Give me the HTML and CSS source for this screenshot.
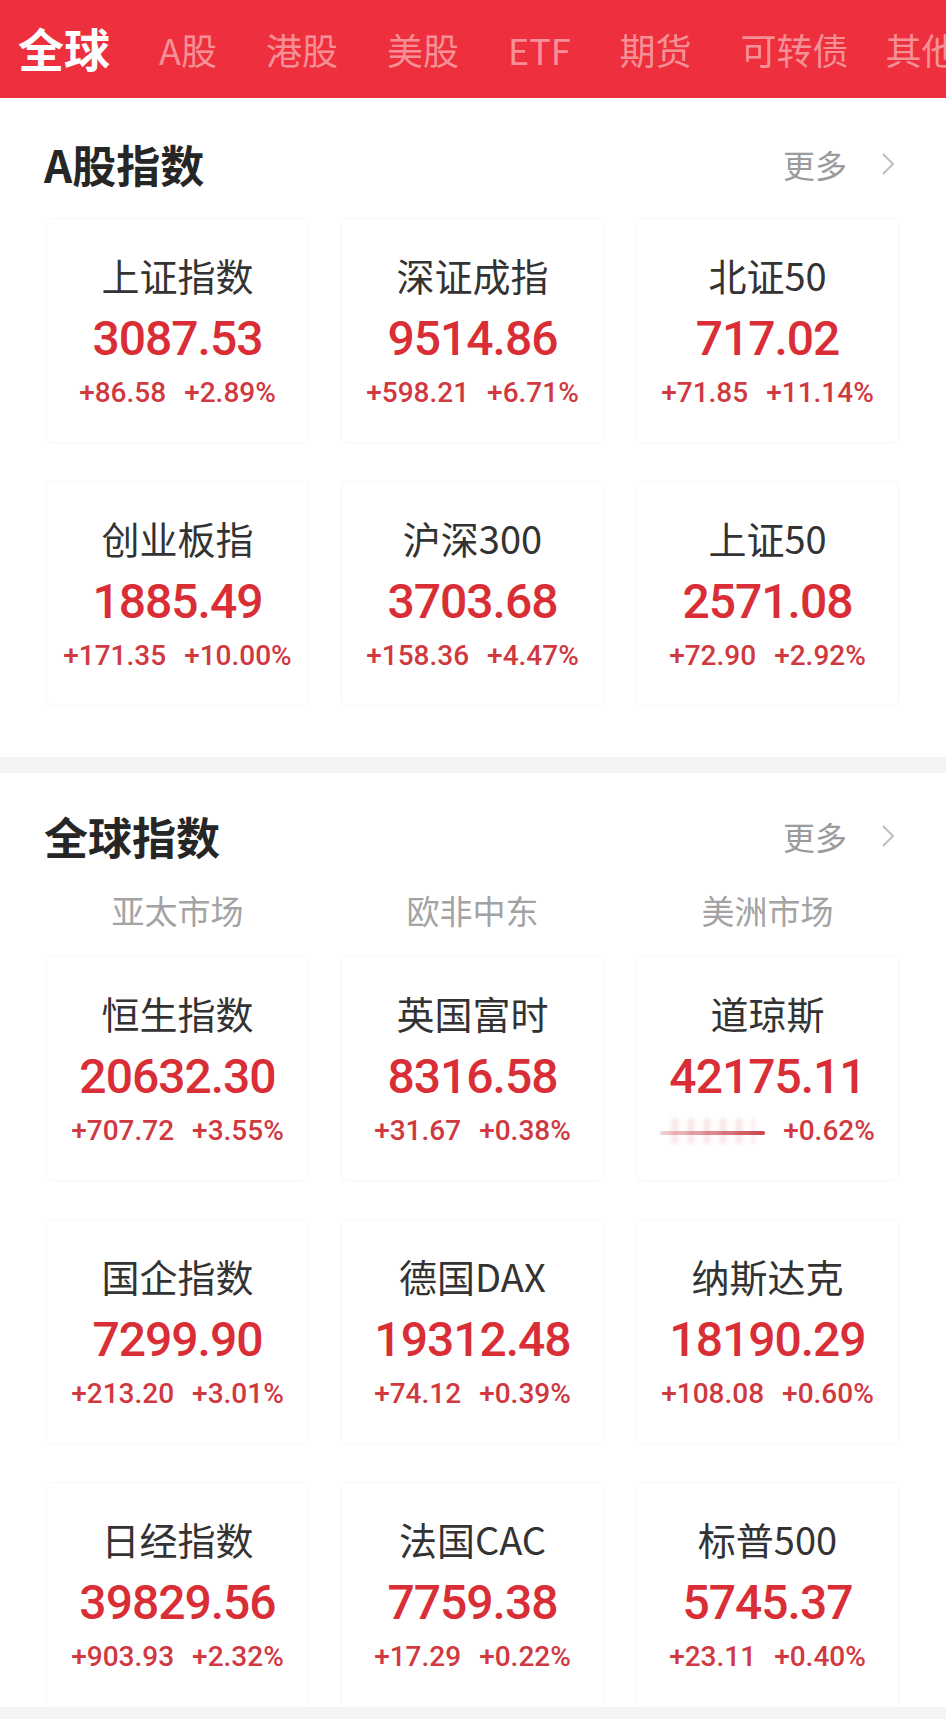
FILE: index.html
```html
<!DOCTYPE html>
<html>
<head>
    <meta charset="utf-8">
    <meta name="viewport" content="width=device-width, initial-scale=1.0">
    <title>行情</title>

<link rel="stylesheet" href="styles.css">

</head>
<body>

  <nav class="tabs">
    <span class="tab tab-active">全球</span>
    <span class="tab">A股</span>
    <span class="tab">港股</span>
    <span class="tab">美股</span>
    <span class="tab">ETF</span>
    <span class="tab">期货</span>
    <span class="tab">可转债</span>
    <span class="tab tab-last">其他</span>
  </nav>

  <section class="panel panel-a">
    <div class="panel-head">
      <h2 class="panel-title">A股指数</h2>
      <a class="more">更多
        <svg class="more-arrow" width="14" height="24" viewBox="0 0 14 24"><path d="M2 2 L12 12 L2 22" fill="none" stroke="#bdbdbd" stroke-width="2"/></svg>
      </a>
    </div>

    <div class="grid">
      <div class="card">
        <div class="card-name">上证指数</div>
        <div class="card-price">3087.53</div>
        <div class="card-change"><span>+86.58</span><span>+2.89%</span></div>
      </div>
      <div class="card">
        <div class="card-name">深证成指</div>
        <div class="card-price">9514.86</div>
        <div class="card-change"><span>+598.21</span><span>+6.71%</span></div>
      </div>
      <div class="card">
        <div class="card-name">北证50</div>
        <div class="card-price">717.02</div>
        <div class="card-change"><span>+71.85</span><span>+11.14%</span></div>
      </div>
      <div class="card">
        <div class="card-name">创业板指</div>
        <div class="card-price">1885.49</div>
        <div class="card-change"><span>+171.35</span><span>+10.00%</span></div>
      </div>
      <div class="card">
        <div class="card-name">沪深300</div>
        <div class="card-price">3703.68</div>
        <div class="card-change"><span>+158.36</span><span>+4.47%</span></div>
      </div>
      <div class="card">
        <div class="card-name">上证50</div>
        <div class="card-price">2571.08</div>
        <div class="card-change"><span>+72.90</span><span>+2.92%</span></div>
      </div>
    </div>
  </section>

  <section class="panel panel-global">
    <div class="panel-head">
      <h2 class="panel-title">全球指数</h2>
      <a class="more">更多
        <svg class="more-arrow" width="14" height="24" viewBox="0 0 14 24"><path d="M2 2 L12 12 L2 22" fill="none" stroke="#bdbdbd" stroke-width="2"/></svg>
      </a>
    </div>

    <div class="regions">
      <span>亚太市场</span>
      <span>欧非中东</span>
      <span>美洲市场</span>
    </div>

    <div class="grid">
      <div class="card">
        <div class="card-name">恒生指数</div>
        <div class="card-price">20632.30</div>
        <div class="card-change"><span>+707.72</span><span>+3.55%</span></div>
      </div>
      <div class="card">
        <div class="card-name">英国富时</div>
        <div class="card-price">8316.58</div>
        <div class="card-change"><span>+31.67</span><span>+0.38%</span></div>
      </div>
      <div class="card">
        <div class="card-name">道琼斯</div>
        <div class="card-price">42175.11</div>
        <div class="card-change"><span class="smear"></span><span>+0.62%</span></div>
      </div>
      <div class="card">
        <div class="card-name">国企指数</div>
        <div class="card-price">7299.90</div>
        <div class="card-change"><span>+213.20</span><span>+3.01%</span></div>
      </div>
      <div class="card">
        <div class="card-name">德国DAX</div>
        <div class="card-price">19312.48</div>
        <div class="card-change"><span>+74.12</span><span>+0.39%</span></div>
      </div>
      <div class="card">
        <div class="card-name">纳斯达克</div>
        <div class="card-price">18190.29</div>
        <div class="card-change"><span>+108.08</span><span>+0.60%</span></div>
      </div>
      <div class="card">
        <div class="card-name">日经指数</div>
        <div class="card-price">39829.56</div>
        <div class="card-change"><span>+903.93</span><span>+2.32%</span></div>
      </div>
      <div class="card">
        <div class="card-name">法国CAC</div>
        <div class="card-price">7759.38</div>
        <div class="card-change"><span>+17.29</span><span>+0.22%</span></div>
      </div>
      <div class="card">
        <div class="card-name">标普500</div>
        <div class="card-price">5745.37</div>
        <div class="card-change"><span>+23.11</span><span>+0.40%</span></div>
      </div>
    </div>
  </section>

</body>
</html>
```

FILE: styles.css
```css
/* общие стили */
body {
  margin: 0;
  background-color: #f4f4f6;
  font-family: "Noto Sans CJK SC", "Noto Sans", sans-serif;
  color: #333;
}

/* верхние вкладки */
.tabs {
  height: 98px;
  background-color: #ee2f3d;
  display: flex;
  align-items: center;
  gap: 49px;
  padding-left: 18px;
  overflow: hidden;
  white-space: nowrap;
}

.tab {
  font-size: 36px;
  color: rgba(255, 255, 255, 0.48);
  flex-shrink: 0;
}

.tab-active {
  font-size: 46px;
  font-weight: 700;
  color: #fff;
  margin-bottom: 4px;
}

.tab-last {
  margin-left: -12px;
}

/* блоки */
.panel {
  background-color: #fff;
}

.panel-a {
  padding: 36px 0 51px;
  margin-bottom: 16px;
}

.panel-global {
  padding: 33px 0 0;
}

.panel-head {
  height: 60px;
  display: flex;
  align-items: center;
  justify-content: space-between;
  padding: 0 51px 0 44px;
}

.panel-title {
  margin: 0;
  font-size: 44px;
  font-weight: 700;
  color: #262626;
}

.more {
  display: flex;
  align-items: center;
  font-size: 32px;
  color: #9b9b9b;
}

.more-arrow {
  margin-left: 34px;
}

.regions {
  display: grid;
  grid-template-columns: repeat(3, 1fr);
  column-gap: 32px;
  padding: 0 47px 0 46px;
  margin-top: 22px;
  height: 44px;
  line-height: 44px;
  text-align: center;
  font-size: 33px;
  color: #a3a3a3;
}

.grid {
  display: grid;
  grid-template-columns: repeat(3, 1fr);
  column-gap: 32px;
  row-gap: 38px;
  padding: 0 47px 0 46px;
  margin-top: 24px;
}

/* карточки */
.card {
  height: 225px;
  box-sizing: border-box;
  padding-top: 33px;
  border: 1px solid #f8f8f8;
  border-radius: 6px;
  box-shadow: 0 1px 5px rgba(0, 0, 0, 0.015);
  display: flex;
  flex-direction: column;
  align-items: center;
}

.card-name {
  font-size: 38px;
  line-height: 46px;
  color: #333;
}

.card-price {
  margin-top: 13px;
  font-family: Roboto, "Liberation Sans", sans-serif;
  font-size: 48px;
  font-weight: 500;
  line-height: 56px;
  letter-spacing: -1px;
  color: #d92e36;
}

.card-change {
  margin-top: 9px;
  display: flex;
  gap: 18px;
  font-family: Roboto, "Liberation Sans", sans-serif;
  font-size: 28px;
  font-weight: 500;
  line-height: 34px;
  color: #d0393f;
}

/* замазанное значение */
.smear {
  position: relative;
  width: 105px;
  height: 34px;
}

.smear::before {
  content: "";
  position: absolute;
  left: 12px;
  right: 10px;
  top: 4px;
  bottom: 4px;
  background: repeating-linear-gradient(90deg, rgba(210, 60, 70, 0.14) 0 6px, rgba(255, 255, 255, 0) 6px 16px);
  filter: blur(2px);
}

.smear::after {
  content: "";
  position: absolute;
  left: 0;
  right: 0;
  top: 17px;
  height: 4px;
  border-radius: 2px;
  background: linear-gradient(90deg, rgba(200, 70, 80, 0.25), #c9434c);
  filter: blur(0.6px);
}
```
